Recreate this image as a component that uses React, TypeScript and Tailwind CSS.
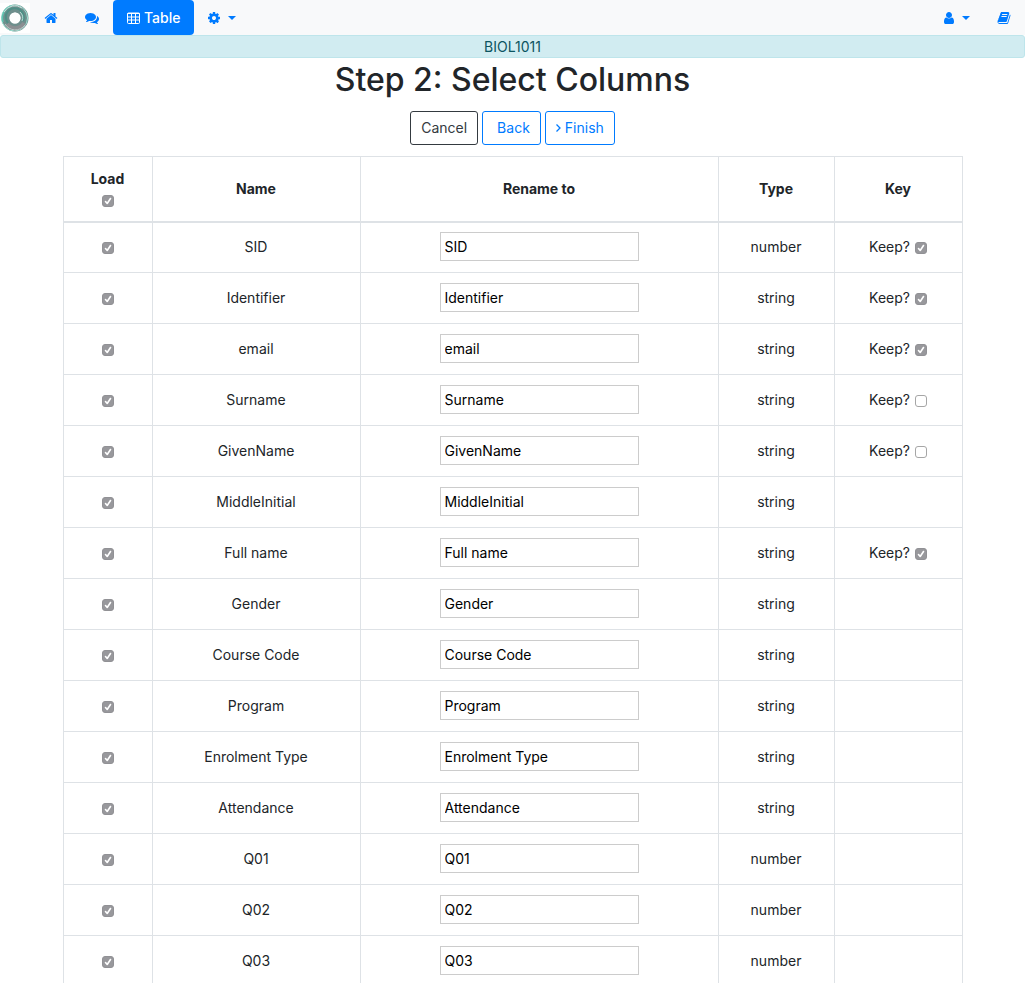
import { type ReactNode } from 'react';
import clsx from 'clsx';

interface Column {
  name: string;
  type: 'number' | 'string';
  // undefined when the column can't be used as a key
  keep?: boolean;
}

const COLUMNS: Column[] = [
  { name: 'SID', type: 'number', keep: true },
  { name: 'Identifier', type: 'string', keep: true },
  { name: 'email', type: 'string', keep: true },
  { name: 'Surname', type: 'string', keep: false },
  { name: 'GivenName', type: 'string', keep: false },
  { name: 'MiddleInitial', type: 'string' },
  { name: 'Full name', type: 'string', keep: true },
  { name: 'Gender', type: 'string' },
  { name: 'Course Code', type: 'string' },
  { name: 'Program', type: 'string' },
  { name: 'Enrolment Type', type: 'string' },
  { name: 'Attendance', type: 'string' },
  { name: 'Q01', type: 'number' },
  { name: 'Q02', type: 'number' },
  { name: 'Q03', type: 'number' },
];

const ICONS = {
  home: 'M1472 992v480q0 26-19 45t-45 19h-384v-384h-256v384h-384q-26 0-45-19t-19-45v-480q0-1 .5-3t.5-3l575-474 575 474q1 2 1 6zm223-69l-62 74q-8 9-21 11h-3q-13 0-21-7l-692-577-692 577q-12 8-24 7-13-2-21-11l-62-74q-8-10-7-23.5t11-21.5l719-599q32-26 76-26t76 26l244 204v-195q0-14 9-23t23-9h192q14 0 23 9t9 23v408l219 182q10 8 11 21.5t-7 23.5z',
  comments:
    'M1408 768q0 139-94 257t-256.5 186.5-353.5 68.5q-86 0-176-16-124 88-278 128-36 9-86 16h-3q-11 0-20.5-8t-11.5-21q-1-3-1-6.5t.5-6.5 2-6l2.5-5 3.5-5.5 4-5 4.5-5 4-4.5q5-6 23-25t26-29.5 22.5-29 25-38.5 20.5-44q-124-72-195-177t-71-224q0-139 94-257t256.5-186.5 353.5-68.5 353.5 68.5 256.5 186.5 94 257zm384 256q0 120-71 224.5t-195 176.5q10 24 20.5 44t25 38.5 22.5 29 26 29.5 23 25q1 1 4 4.5t4.5 5 4 5 3.5 5.5l2.5 5 2 6 .5 6.5-1 6.5q-3 14-13 22t-22 7q-50-7-86-16-154-40-278-128-90 16-176 16-271 0-472-132 58 4 88 4 161 0 309-45t264-129q125-92 192-212t67-254q0-77-23-152 129 71 204 178t75 230z',
  cog: 'M1152 896q0-106-75-181t-181-75-181 75-75 181 75 181 181 75 181-75 75-181zm512-109v222q0 12-8 23t-20 13l-185 28q-19 54-39 91 35 50 107 138 10 12 10 25t-9 23q-27 37-99 108t-94 71q-12 0-26-9l-138-108q-44 23-91 38-16 136-29 186-7 28-36 28h-222q-14 0-24.5-8.5t-11.5-21.5l-28-184q-49-16-90-37l-141 107q-10 9-25 9-14 0-25-11-126-114-165-168-7-10-7-23 0-12 8-23 15-21 51-66.5t54-70.5q-27-50-41-99l-183-27q-13-2-21-12.5t-8-23.5v-222q0-12 8-23t19-13l186-28q14-46 39-92-40-57-107-138-10-12-10-24 0-10 9-23 26-36 98.5-107.5t94.5-71.5q13 0 26 10l138 107q44-23 91-38 16-136 29-186 7-28 36-28h222q14 0 24.5 8.5t11.5 21.5l28 184q49 16 90 37l142-107q9-9 24-9 13 0 25 10 129 119 165 170 7 8 7 22 0 12-8 23-15 21-51 66.5t-54 70.5q26 50 41 98l183 28q13 2 21 12.5t8 23.5z',
  user: 'M1536 1399q0 109-62.5 187t-150.5 78h-854q-88 0-150.5-78t-62.5-187q0-85 8.5-160.5t31.5-152 58.5-131 94-89 134.5-34.5q131 128 313 128t313-128q76 0 134.5 34.5t94 89 58.5 131 31.5 152 8.5 160.5zm-256-887q0 159-112.5 271.5t-271.5 112.5-271.5-112.5-112.5-271.5 112.5-271.5 271.5-112.5 271.5 112.5 112.5 271.5z',
  book: 'M1703 478q40 57 18 129l-275 906q-19 64-76.5 107.5t-122.5 43.5h-923q-77 0-148.5-53.5t-99.5-131.5q-24-67-2-127 0-4 3-27t4-37q1-8-3-21.5t-3-19.5q2-11 8-21t16.5-23.5 16.5-23.5q23-38 45-91.5t30-91.5q3-10 .5-30t-.5-28q3-11 17-28t17-23q21-36 42-92t25-90q1-9-2.5-32t.5-28q4-13 22-30.5t22-22.5q19-26 42.5-84.5t27.5-96.5q1-8-3-25.5t-2-26.5q2-8 9-18t18-23 17-21q8-12 16.5-30.5t15-35 16-36 19.5-32 26.5-23.5 36-11.5 47.5 5.5l-1 3q38-9 51-9h761q74 0 114 56t18 130l-274 906q-36 119-71.5 153.5t-128.5 34.5h-869q-27 0-38 15-11 16-1 43 24 70 144 70h923q29 0 56-15.5t35-41.5l300-987q7-22 5-57 38 15 59 43zm-1064 2q-4 13 2 22.5t20 9.5h608q13 0 25.5-9.5t16.5-22.5l21-64q4-13-2-22.5t-20-9.5h-608q-13 0-25.5 9.5t-16.5 22.5zm-83 256q-4 13 2 22.5t20 9.5h608q13 0 25.5-9.5t16.5-22.5l21-64q4-13-2-22.5t-20-9.5h-608q-13 0-25.5 9.5t-16.5 22.5z',
};

function Icon({ name }: { name: keyof typeof ICONS }) {
  return (
    <svg viewBox="0 0 1792 1792" className="size-[14px]" fill="currentColor" aria-hidden="true">
      <path d={ICONS[name]} />
    </svg>
  );
}

function TableIcon() {
  return (
    <svg viewBox="0 0 13 12" className="h-3 w-[13px]" fill="none" stroke="currentColor" aria-hidden="true">
      <rect x="0.5" y="1" width="12" height="10.5" rx="1" />
      <path d="M0.5 1.5h12M0.5 5h12M0.5 8h12M4.5 1v10.5M8.5 1v10.5" />
    </svg>
  );
}

function Caret() {
  return (
    <svg viewBox="0 0 8 4" className="h-1 w-2" fill="currentColor" aria-hidden="true">
      <path d="M0 0h8L4 4z" />
    </svg>
  );
}

function Logo() {
  return (
    <svg viewBox="0 0 30 30" className="size-[30px] bg-white" fill="none" aria-hidden="true">
      <circle cx="15" cy="15" r="9.5" stroke="#6f8f8d" strokeWidth="8" />
      <circle cx="14.5" cy="15" r="13" stroke="#9fe0d2" strokeWidth="1" />
      <path d="M3 19A12.5 12.5 0 0 1 12 3" stroke="#5fc4b1" strokeWidth="1.5" />
      <path d="M4 9a12.5 12.5 0 0 1 18-4" stroke="#c9dcd9" strokeWidth="1" />
      <path d="M7 21a10 10 0 0 0 17-1" stroke="#8c8f92" strokeWidth="4" />
      <path d="M8 20A9 9 0 1 1 23 18" stroke="#4e8f86" strokeWidth="2" />
      <path d="M5 21a12 12 0 0 0 20 1" stroke="#b9c4c4" strokeWidth="1" />
      <path d="M20 9a8 8 0 0 1 2 9" stroke="#b5ded6" strokeWidth="1" />
      <circle cx="15" cy="15" r="5.5" fill="#fff" />
    </svg>
  );
}

function Checkbox({ label, checked }: { label: string; checked: boolean }) {
  return (
    <span className="inline-grid size-3 place-items-center align-[-2px]">
      <input
        type="checkbox"
        aria-label={label}
        defaultChecked={checked}
        className="peer col-start-1 row-start-1 size-3 appearance-none rounded-[3px] border border-[#a6a6a6] bg-white checked:border-[#919195] checked:bg-[#98989c]"
      />
      <svg
        viewBox="0 0 12 12"
        className="pointer-events-none invisible col-start-1 row-start-1 size-3 peer-checked:visible"
        fill="none"
        stroke="#fff"
        strokeWidth="1.6"
        strokeLinecap="round"
        strokeLinejoin="round"
        aria-hidden="true"
      >
        <path d="M3.5 6.5 5.2 8.5 8.5 3.5" />
      </svg>
    </span>
  );
}

function NavLink({ label, className, children }: { label: string; className?: string; children: ReactNode }) {
  return (
    <a href="#" aria-label={label} className={clsx('flex h-full items-center', className)}>
      {children}
    </a>
  );
}

function ActionButton({ dark, children }: { dark?: boolean; children: ReactNode }) {
  return (
    <button
      type="button"
      className={clsx(
        'flex h-[34px] items-center rounded-[3px] border px-[10px] pb-px',
        dark ? 'border-[#343a40] text-[#343a40]' : 'border-[#007bff] text-[#007bff]',
      )}
    >
      {children}
    </button>
  );
}

export default function App() {
  return (
    <div className="bg-white font-[Inter,sans-serif] text-[14px] leading-[21px] text-[#212529]">
      {/* Navbar */}
      <nav className="flex h-[35px] items-center bg-[#f8f9fa] text-[#007bff]">
        <a href="#" aria-label="Start page">
          <Logo />
        </a>
        <NavLink label="Home" className="px-[14px]">
          <Icon name="home" />
        </NavLink>
        <NavLink label="Messages" className="pr-[14px] pl-[13px]">
          <Icon name="comments" />
        </NavLink>
        <NavLink label="Table" className="gap-1 rounded bg-[#007bff] px-[14px] font-medium text-white">
          <TableIcon />
          Table
        </NavLink>
        <NavLink label="Settings" className="gap-[7px] px-[13px]">
          <Icon name="cog" />
          <Caret />
        </NavLink>
        <NavLink label="Account" className="ml-auto gap-[6px] px-[13px]">
          <Icon name="user" />
          <Caret />
        </NavLink>
        <NavLink label="Documentation" className="px-[14px]">
          <Icon name="book" />
        </NavLink>
      </nav>

      <div className="rounded-[3px] border border-[#bee5eb] bg-[#d1ecf1] text-center text-[#0c5460]">
        BIOL1011
      </div>

      <main className="mx-auto w-full max-w-[900px]">
        <h1 className="text-center text-[32px] leading-[44px] font-medium">Step 2: Select Columns</h1>

        <div className="mt-[9px] flex justify-center gap-1">
          <ActionButton dark>Cancel</ActionButton>
          <ActionButton>
            <span className="pl-1">Back</span>
          </ActionButton>
          <ActionButton>
            <svg
              viewBox="0 0 5 8"
              className="mr-1 h-2 w-[5px]"
              fill="none"
              stroke="currentColor"
              strokeWidth="1.3"
              aria-hidden="true"
            >
              <path d="M0.5 0.5 4 4 0.5 7.5" />
            </svg>
            Finish
          </ActionButton>
        </div>

        <table className="mt-[11px] w-full table-fixed border-collapse text-center [&_td]:border [&_td]:border-[#dee2e6] [&_td]:pb-0.5 [&_th]:border [&_th]:border-b-2 [&_th]:border-[#dee2e6]">
          <colgroup>
            <col className="w-[89px]" />
            <col className="w-[208px]" />
            <col />
            <col className="w-[116px]" />
            <col className="w-[128px]" />
          </colgroup>
          <thead>
            <tr className="h-[65px]">
              <th>
                Load
                <div>
                  <Checkbox label="Load all columns" checked />
                </div>
              </th>
              <th>Name</th>
              <th>Rename to</th>
              <th>Type</th>
              <th>Key</th>
            </tr>
          </thead>
          <tbody>
            {COLUMNS.map((col) => (
              <tr key={col.name} className="h-[51px]">
                <td>
                  <Checkbox label={`Load ${col.name}`} checked />
                </td>
                <td>{col.name}</td>
                <td>
                  <input
                    type="text"
                    aria-label={`Rename ${col.name} to`}
                    defaultValue={col.name}
                    className="h-[29px] w-[199px] border border-[#ccc] px-1 align-middle text-black"
                  />
                </td>
                <td>{col.type}</td>
                <td>
                  {col.keep !== undefined && (
                    <label>
                      <span className="mr-px">Keep?</span>{' '}
                      <Checkbox label={`Keep ${col.name} as key`} checked={col.keep} />
                    </label>
                  )}
                </td>
              </tr>
            ))}
          </tbody>
        </table>
      </main>
    </div>
  );
}
